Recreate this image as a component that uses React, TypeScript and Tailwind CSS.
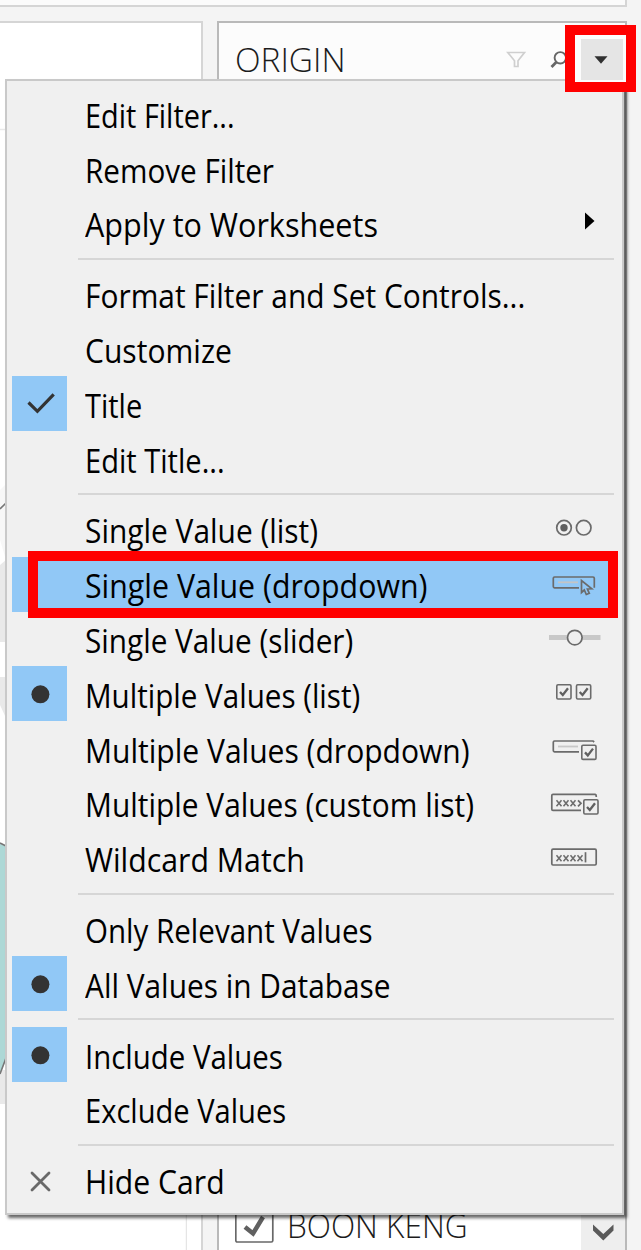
import { useLayoutEffect, useRef, useState, type ReactNode } from 'react';

type Item = {
  label: string;
  width: number;
  mark?: 'check' | 'dot' | 'close';
  highlighted?: boolean;
  submenu?: boolean;
  icon?: ReactNode;
};

/* Text condensed horizontally to take up a given advance width. */
function Label({ text, width, className = '' }: { text: string; width: number; className?: string }) {
  const ref = useRef<HTMLSpanElement>(null);
  const [scale, setScale] = useState(1);
  useLayoutEffect(() => {
    if (ref.current) setScale(width / ref.current.offsetWidth);
  }, [width, text]);
  return (
    <span
      ref={ref}
      className={`inline-block origin-left whitespace-nowrap ${className}`}
      style={{ transform: `scaleX(${scale})` }}
    >
      {text}
    </span>
  );
}

function MiniCheck({ x, y }: { x: number; y: number }) {
  return (
    <g transform={`translate(${x} ${y})`}>
      <rect x="0.8" y="0.8" width="14.2" height="14.2" rx="1.2" fill="#efefef" stroke="#6b6b6b" strokeWidth="1.6" />
      <path d="M4 8 L6.8 11 L12 4.2" fill="none" stroke="#606060" strokeWidth="2.3" />
    </g>
  );
}

function Crosses({ x, y, n }: { x: number; y: number; n: number }) {
  return (
    <g stroke="#6b6b6b" strokeWidth="1.5">
      {Array.from({ length: n }, (_, i) => (
        <path key={i} d={`M${x + i * 7} ${y} l5 6 m0 -6 l-5 6`} />
      ))}
    </g>
  );
}

const stroke = { fill: 'none', stroke: '#6b6b6b', strokeWidth: 1.7 };

const RadioIcon = (
  <svg width="56" height="32" viewBox="0 0 56 32">
    <circle cx="17" cy="14.7" r="7.3" {...stroke} />
    <circle cx="17" cy="14.7" r="3.7" fill="#5f5f5f" />
    <circle cx="36.7" cy="14.7" r="7.3" {...stroke} />
  </svg>
);

const DropdownIcon = (
  <svg width="56" height="32" viewBox="0 0 56 32">
    <path d="M32 19.8 H7.5 Q6.3 19.8 6.3 18.6 V10.2 Q6.3 9 7.5 9 H46 Q47.3 9 47.3 10.2 V19.8" {...stroke} />
    <path d="M11 14.3 H31" stroke="#c4c4c4" strokeWidth="1.8" />
    <path d="M34.5 12.5 V24.5 L37.3 22 L39.3 26.5 L42.3 25.3 L40.4 21 L44.8 20.8 Z" {...stroke} />
  </svg>
);

const SliderIcon = (
  <svg width="56" height="32" viewBox="0 0 56 32">
    <path d="M2 14.6 H53.5" stroke="#c8c8c8" strokeWidth="5" />
    <circle cx="27.8" cy="14.6" r="7.3" fill="#efefef" stroke="#6b6b6b" strokeWidth="1.7" />
  </svg>
);

const ChecksIcon = (
  <svg width="56" height="32" viewBox="0 0 56 32">
    <MiniCheck x={9} y={6} />
    <MiniCheck x={28.7} y={6} />
  </svg>
);

const DropdownCheckIcon = (
  <svg width="56" height="32" viewBox="0 0 56 32">
    <path d="M32 18.8 H7.5 Q6.3 18.8 6.3 17.6 V9.2 Q6.3 8 7.5 8 H46 L47.2 9" {...stroke} />
    <path d="M11 13.5 H31" stroke="#c8c8c8" strokeWidth="1.8" />
    <MiniCheck x={34} y={11.4} />
  </svg>
);

const CustomListIcon = (
  <svg width="56" height="32" viewBox="0 0 56 32">
    <path d="M34 23.4 H6 Q4.8 23.4 4.8 22.2 V8.6 Q4.8 7.4 6 7.4 H48 Q49.3 7.4 49.3 10" {...stroke} />
    <Crosses x={9.5} y={13.3} n={3} />
    <path d="M31 13.3 l3 3 l-3 3" {...stroke} />
    <MiniCheck x={36} y={12} />
  </svg>
);

const WildcardIcon = (
  <svg width="56" height="32" viewBox="0 0 56 32">
    <rect x="4.8" y="7.2" width="44.4" height="15.8" rx="1.2" {...stroke} />
    <Crosses x={9.5} y={13.2} n={4} />
    <path d="M38.5 10.2 V20.4" {...stroke} />
  </svg>
);

const groups: Item[][] = [
  [
    { label: 'Edit Filter...', width: 150 },
    { label: 'Remove Filter', width: 189 },
    { label: 'Apply to Worksheets', width: 293, submenu: true },
  ],
  [
    { label: 'Format Filter and Set Controls...', width: 440 },
    { label: 'Customize', width: 146.5 },
    { label: 'Title', width: 57 },
    { label: 'Edit Title...', width: 140 },
  ],
  [
    { label: 'Single Value (list)', width: 233.5, icon: RadioIcon },
    { label: 'Single Value (dropdown)', width: 342, highlighted: true, icon: DropdownIcon },
    { label: 'Single Value (slider)', width: 268.5, icon: SliderIcon },
    { label: 'Multiple Values (list)', width: 275.5, mark: 'dot', icon: ChecksIcon },
    { label: 'Multiple Values (dropdown)', width: 385, icon: DropdownCheckIcon },
    { label: 'Multiple Values (custom list)', width: 388.5, icon: CustomListIcon },
    { label: 'Wildcard Match', width: 219.5, icon: WildcardIcon },
  ],
  [
    { label: 'Only Relevant Values', width: 288 },
    { label: 'All Values in Database', width: 306, mark: 'dot' },
  ],
  [
    { label: 'Include Values', width: 197.5, mark: 'dot' },
    { label: 'Exclude Values', width: 201 },
  ],
  [{ label: 'Hide Card', width: 139.5, mark: 'close' }],
];
groups[1][2].mark = 'check';

function Mark({ kind }: { kind: 'check' | 'dot' | 'close' }) {
  return (
    <svg width="55" height="55" viewBox="0 0 55 55">
      {kind === 'check' && <path d="M16.5 26.5 L25.4 35.3 L41.7 18.3" fill="none" stroke="#333" strokeWidth="3.2" />}
      {kind === 'dot' && <circle cx="28.4" cy="28.3" r="9" fill="#333" />}
      {kind === 'close' && (
        <path d="M20 20 L37 37 M37 20 L20 37" stroke="#696969" strokeWidth="2.8" strokeLinecap="round" />
      )}
    </svg>
  );
}

function Row({ item }: { item: Item }) {
  return (
    <div className={`flex h-[54.8px] items-center ${item.highlighted ? 'bg-[#91c8f6]' : ''}`}>
      <div
        className={`h-full w-[55px] shrink-0 overflow-hidden ${
          item.mark && item.mark !== 'close' ? 'bg-[#91c8f6]' : ''
        }`}
      >
        {item.mark && <Mark kind={item.mark} />}
      </div>
      <div className="flex-1 pt-[4px] pl-[17.5px] text-[32px] leading-[54px] text-black">
        <Label text={item.label} width={item.width} />
      </div>
      {item.icon && <div className="mr-[14px] shrink-0">{item.icon}</div>}
      {item.submenu && (
        <svg width="10" height="18" viewBox="0 0 10 18" className="mr-[22px] -mt-[4px] shrink-0">
          <path d="M0 0.5 L9.5 9 L0 17.5 Z" fill="#000" />
        </svg>
      )}
    </div>
  );
}

function Menu() {
  return (
    <div className="absolute top-[79px] left-[5px] h-[1136px] w-[619px] border-2 border-[#c9c9c9] bg-[#f0f0f0] px-[5px] pt-[5.4px] shadow-[3px_3px_3px_rgba(0,0,0,0.6)]">
      {groups.map((group, i) => (
        <div key={i}>
          {i > 0 && (
            <div className="flex h-4 items-center pr-[3px] pl-[66px]">
              <div className="h-[2px] w-full bg-[#d6d6d6]" />
            </div>
          )}
          {group.map((item) => (
            <Row key={item.label} item={item} />
          ))}
        </div>
      ))}
    </div>
  );
}

export default function App() {
  return (
    <div className="relative flex h-[1250px] w-[641px] flex-col overflow-hidden bg-[#f4f4f4] font-['Open_Sans','Noto_Sans',sans-serif]">
      <div className="h-[7px] w-[627px] shrink-0 border-r-2 border-b-2 border-[#d5d5d5] bg-[#fbfbfb]" />
      <div className="mt-[14px] flex flex-1">
        <div className="flex w-[203px] border-t-2 border-r-2 border-[#d5d5d5] bg-white">
          <svg width="187" height="1227" viewBox="0 23 187 1227">
            <path d="M0 129.5 H187" stroke="#e9e9e9" strokeWidth="1.5" />
            <path d="M186.5 129 V1250" stroke="#e5e5e5" strokeWidth="1.5" />
            <path d="M0 565 L6 560 V642 H0 Z M0 677 H6 V718 L0 705 Z M0 1070 H6 V1104 H0 Z" fill="#e9e9e9" />
            <path d="M0 490 L6 484 V560 L0 540 Z" fill="#f7f7f7" />
            <path d="M0 844 L6 846 V1060 L0 1074 Z" fill="#add8d6" />
            <path d="M0 509 L6 503 M0 843 L6 846 M0 1074 L6 1058" fill="none" stroke="#777" strokeWidth="1.6" />
          </svg>
        </div>
        <div className="ml-[14px] flex w-[410px] flex-col justify-between border-x-2 border-t-2 border-[#b9b9b9] bg-[#fcfcfc]">
          <div className="flex h-[57px] items-center pl-[15.5px] text-[33px] font-light text-[#1c1c1c]">
            <Label text="ORIGIN" width={110.5} className="mt-[17px] leading-[44px]" />
            <svg width="64" height="24" viewBox="0 0 64 24" className="mt-[16px] ml-auto mr-[55px]">
              <path
                d="M1.8 4.5 H18.5 L12 12.8 V18.5 H8.5 V12.8 Z"
                fill="none"
                stroke="#cfcfcf"
                strokeWidth="1.7"
              />
              <circle cx="54.3" cy="9.8" r="5.7" fill="none" stroke="#666" strokeWidth="1.9" />
              <path d="M50.2 14.2 L45.5 19" stroke="#666" strokeWidth="2.8" />
            </svg>
          </div>
          <div className="flex h-[50px] bg-white">
            <div className="flex flex-1 pl-[16px]">
              <svg width="39" height="44" viewBox="0 0 39 44">
                <rect x="0.8" y="1" width="37" height="41" rx="1.5" fill="#fff" stroke="#686868" strokeWidth="1.7" />
                <path d="M10 27 L18 33.5 L28 17" fill="none" stroke="#606060" strokeWidth="4.5" />
              </svg>
              <div className="pt-px pl-[13px] text-[33px] leading-[50px] font-light text-[#1c1c1c]">
                <Label text="BOON KENG" width={181} />
              </div>
            </div>
            <div className="flex w-[44px] justify-center bg-[#eeeeee] pt-[23px]">
              <svg width="21" height="19" viewBox="0 0 21 19">
                <path d="M0 1.5 L10.3 11 L20.5 1.5 V7.5 L10.3 17.5 L0 7.5 Z" fill="#5a5a5a" />
              </svg>
            </div>
          </div>
        </div>
      </div>
      <Menu />
      <div className="absolute top-[551px] left-[28px] h-[67px] w-[590px] border-10 border-[#ff0000]" />
      <div className="absolute top-[25px] left-[565px] flex h-[67px] w-[71px] border-10 border-[#ff0000] bg-[#fcfcfc] pt-[4px] pl-[6px]">
        <div className="flex h-[41px] w-[42px] items-center justify-center bg-[#e5e5e5]">
          <svg width="14" height="8" viewBox="0 0 14 8" className="mr-[2px]">
            <path d="M0.5 0.3 H13.5 L7 7.7 Z" fill="#303030" />
          </svg>
        </div>
      </div>
    </div>
  );
}
